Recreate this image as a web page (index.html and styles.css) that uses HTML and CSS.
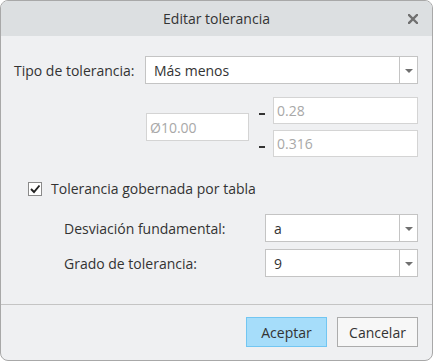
FILE: index.html
```html
<!DOCTYPE html>
<html>
  <head>
    <link rel="stylesheet" href="styles.css">
  </head>
  <body>
    <div class="dialog">
      <div class="titlebar">
        <span class="title">Editar tolerancia</span>
        <svg class="close" width="10" height="10" viewBox="0 0 10 10">
          <path d="M1 1 L9 9 M9 1 L1 9" stroke="#707070" stroke-width="2.4" stroke-linecap="square"/>
        </svg>
      </div>

      <div class="content">
        <div class="row-tipo">
          <span class="label">Tipo de tolerancia:</span>
          <div class="select wide">
            <span class="value">Más menos</span>
            <span class="arrow"></span>
          </div>
        </div>

        <div class="tol">
          <div class="field nominal">Ø10.00</div>
          <div class="limits">
            <div class="limit">
              <span class="dash"></span>
              <div class="field">0.28</div>
            </div>
            <div class="limit">
              <span class="dash"></span>
              <div class="field">0.316</div>
            </div>
          </div>
        </div>

        <div class="check-row">
          <span class="checkbox">
            <svg width="12" height="12" viewBox="0 0 12 12">
              <path d="M2 6 L5 9 L10.5 2.5" fill="none" stroke="#222" stroke-width="1.9"/>
            </svg>
          </span>
          <span class="label">Tolerancia gobernada por tabla</span>
        </div>

        <div class="sub">
          <div class="sub-row">
            <span class="label">Desviación fundamental:</span>
            <div class="select">
              <span class="value">a</span>
              <span class="arrow"></span>
            </div>
          </div>
          <div class="sub-row">
            <span class="label">Grado de tolerancia:</span>
            <div class="select">
              <span class="value">9</span>
              <span class="arrow"></span>
            </div>
          </div>
        </div>
      </div>

      <div class="footer">
        <button class="btn primary">Aceptar</button>
        <button class="btn">Cancelar</button>
      </div>
    </div>
  </body>
</html>
```

FILE: styles.css
```css
* { box-sizing: border-box; }
body {
  margin: 0;
  background: #ffffff;
  font: 14px "Open Sans", "Noto Sans", sans-serif;
  color: #333333;
}
.dialog {
  width: 433px;
  height: 361px;
  border: 1px solid #a8a8a8;
  border-radius: 8px;
  overflow: hidden;
  background: #eff0f2;
  display: flex;
  flex-direction: column;
}
.titlebar {
  height: 35px;
  background: #dcdfe1;
  display: flex;
  align-items: center;
  justify-content: center;
  position: relative;
}
.title {
  font-size: 14px;
  color: #333333;
}
.close {
  position: absolute;
  right: 14px;
  top: 13px;
}
.content {
  flex: 1;
  padding: 20px 14px 0 13px;
}
.row-tipo {
  display: flex;
  align-items: center;
  justify-content: space-between;
}
.label {
  white-space: nowrap;
}
.select {
  height: 28px;
  border: 1px solid #c4c4c4;
  background: #ffffff;
  display: flex;
  align-items: center;
}
.select.wide {
  width: 273px;
}
.select .value {
  flex: 1;
  padding-left: 8px;
}
.select .arrow {
  width: 18px;
  height: 100%;
  border-left: 1px solid #c4c4c4;
  position: relative;
}
.select .arrow::after {
  content: "";
  position: absolute;
  left: 5px;
  top: 12px;
  border-left: 4px solid transparent;
  border-right: 4px solid transparent;
  border-top: 4px solid #707070;
}
.tol {
  display: flex;
  align-items: center;
  margin: 13px 0 0 132px;
}
.field {
  height: 28px;
  border: 1px solid #d4d4d4;
  background: #ffffff;
  color: #a8a8a8;
  padding-left: 3px;
  display: flex;
  align-items: center;
}
.nominal {
  width: 104px;
}
.limits {
  display: flex;
  flex-direction: column;
  gap: 6px;
  margin-left: 9px;
}
.limit {
  display: flex;
  align-items: center;
}
.limit .field {
  width: 145px;
  height: 27px;
}
.dash {
  width: 6px;
  height: 2px;
  background: #333333;
  margin: 7px 8px 0 1px;
}
.check-row {
  display: flex;
  align-items: center;
  margin: 22px 0 0 14px;
  gap: 9px;
}
.checkbox {
  width: 14px;
  height: 14px;
  border: 1px solid #8a8a8a;
  background: #ffffff;
  display: flex;
  align-items: center;
  justify-content: center;
}
.sub {
  margin: 16px 0 0 50px;
  display: flex;
  flex-direction: column;
  gap: 7px;
}
.sub-row {
  display: flex;
  align-items: center;
  justify-content: space-between;
}
.sub-row .select {
  width: 153px;
}
.footer {
  height: 56px;
  border-top: 1px solid #c4c4c4;
  display: flex;
  justify-content: flex-end;
  align-items: flex-start;
  gap: 10px;
  padding: 12px 14px 0 0;
}
.btn {
  width: 81px;
  height: 30px;
  border: 1px solid #acacac;
  background: #f7f7f7;
  font: 14px "Open Sans", "Noto Sans", sans-serif;
  color: #333333;
  padding: 0;
}
.btn.primary {
  border-color: #72c6f2;
  background: #a6ddfa;
}
```
